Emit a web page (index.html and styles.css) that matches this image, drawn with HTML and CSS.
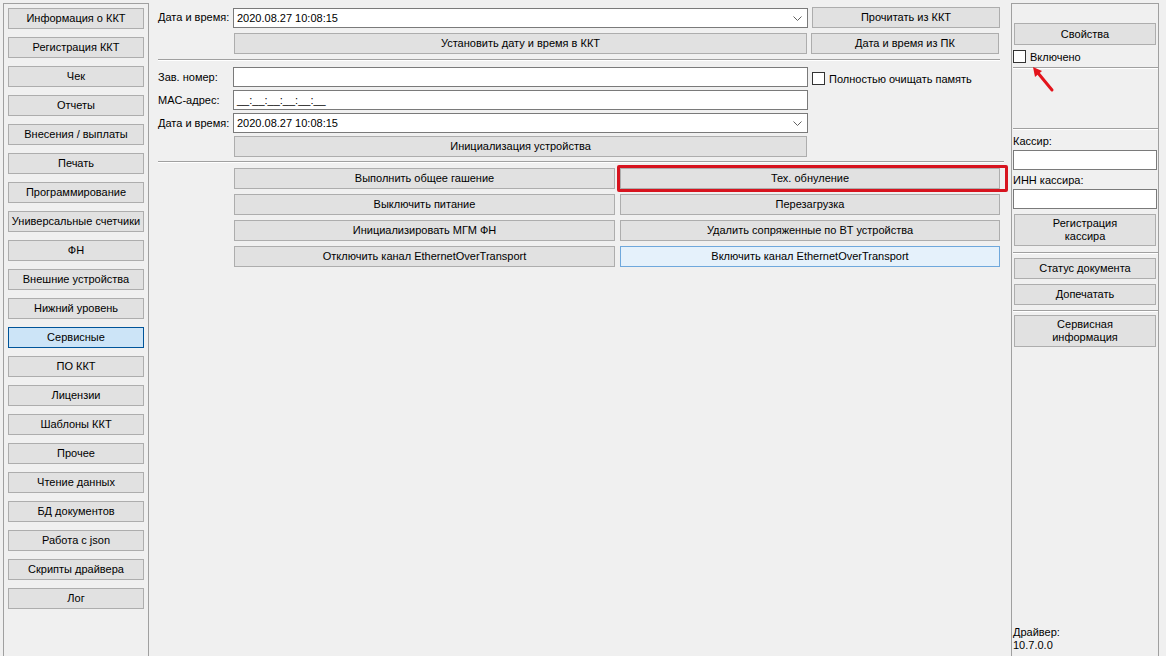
FILE: index.html
```html
<!DOCTYPE html>
<html lang="ru">
<head>
  <meta charset="UTF-8" />
  <title>Тест драйвера ККТ</title>
  <link rel="stylesheet" href="styles.css">
</head>
<body>

<div class="app">
  <aside class="nav">
    <button class="btn nav-btn">Информация о ККТ</button>
    <button class="btn nav-btn">Регистрация ККТ</button>
    <button class="btn nav-btn">Чек</button>
    <button class="btn nav-btn">Отчеты</button>
    <button class="btn nav-btn">Внесения / выплаты</button>
    <button class="btn nav-btn">Печать</button>
    <button class="btn nav-btn">Программирование</button>
    <button class="btn nav-btn">Универсальные счетчики</button>
    <button class="btn nav-btn">ФН</button>
    <button class="btn nav-btn">Внешние устройства</button>
    <button class="btn nav-btn">Нижний уровень</button>
    <button class="btn nav-btn active">Сервисные</button>
    <button class="btn nav-btn">ПО ККТ</button>
    <button class="btn nav-btn">Лицензии</button>
    <button class="btn nav-btn">Шаблоны ККТ</button>
    <button class="btn nav-btn">Прочее</button>
    <button class="btn nav-btn">Чтение данных</button>
    <button class="btn nav-btn">БД документов</button>
    <button class="btn nav-btn">Работа с json</button>
    <button class="btn nav-btn">Скрипты драйвера</button>
    <button class="btn nav-btn">Лог</button>
  </aside>

  <main class="main">
    <div class="row first">
      <span class="lbl">Дата и время:</span>
      <div class="field select">2020.08.27 10:08:15
        <svg class="chev" width="9" height="5" viewBox="0 0 9 5"><polyline points="0.5,0.5 4.5,4.5 8.5,0.5" fill="none" stroke="#606060" stroke-width="1"/></svg>
      </div>
      <button class="btn side">Прочитать из ККТ</button>
    </div>
    <div class="row gap5">
      <span class="lbl"></span>
      <button class="btn wide">Установить дату и время в ККТ</button>
      <button class="btn side">Дата и время из ПК</button>
    </div>

    <div class="sep sep-top"></div>

    <div class="row form-row">
      <span class="lbl">Зав. номер:</span>
      <div class="field"></div>
      <label class="check"><span class="box"></span>Полностью очищать память</label>
    </div>
    <div class="row form-row">
      <span class="lbl">MAC-адрес:</span>
      <div class="field">__:__:__:__:__:__</div>
    </div>
    <div class="row form-row">
      <span class="lbl">Дата и время:</span>
      <div class="field select">2020.08.27 10:08:15
        <svg class="chev" width="9" height="5" viewBox="0 0 9 5"><polyline points="0.5,0.5 4.5,4.5 8.5,0.5" fill="none" stroke="#606060" stroke-width="1"/></svg>
      </div>
    </div>
    <div class="row form-row">
      <span class="lbl"></span>
      <button class="btn wide">Инициализация устройства</button>
    </div>

    <div class="sep sep-mid"></div>

    <div class="actions">
      <button class="btn">Выполнить общее гашение</button>
      <div class="marked">
        <button class="btn">Тех. обнуление</button>
        <span class="red-frame"></span>
      </div>
      <button class="btn">Выключить питание</button>
      <button class="btn">Перезагрузка</button>
      <button class="btn">Инициализировать МГМ ФН</button>
      <button class="btn">Удалить сопряженные по BT устройства</button>
      <button class="btn">Отключить канал EthernetOverTransport</button>
      <button class="btn hot">Включить канал EthernetOverTransport</button>
    </div>
  </main>

  <aside class="panel">
    <button class="btn pbtn props">Свойства</button>
    <label class="check on"><span class="box"></span>Включено</label>
    <div class="sep psep first-sep"></div>
    <div class="sep psep second-sep"></div>

    <div class="plbl">Кассир:</div>
    <div class="field pfield"></div>
    <div class="plbl inn">ИНН кассира:</div>
    <div class="field pfield"></div>
    <button class="btn pbtn tall">Регистрация<br>кассира</button>
    <div class="sep psep s3"></div>
    <button class="btn pbtn b1">Статус документа</button>
    <button class="btn pbtn b2">Допечатать</button>
    <div class="sep psep s4"></div>
    <button class="btn pbtn tall b3">Сервисная<br>информация</button>

    <div class="driver">Драйвер:<br>10.7.0.0</div>

    <svg class="arrow" width="30" height="30" viewBox="0 0 30 30">
      <line x1="22" y1="25" x2="8" y2="8" stroke="#e3141c" stroke-width="3" stroke-linecap="round"/>
      <polygon points="3,2 12,6 5,12" fill="#e3141c"/>
    </svg>
  </aside>
</div>

</body>
</html>
```

FILE: styles.css
```css
* {
  box-sizing: border-box;
}
body {
  margin: 0;
  background: #f0f0f0;
  font-family: Tahoma, "Liberation Sans", Arial, sans-serif;
  font-size: 11px;
  color: #000;
  overflow: hidden;
}
.app {
  display: flex;
  height: 656px;
  padding-top: 3px;
}

/* buttons */
.btn {
  height: 21px;
  padding: 0;
  margin: 0;
  font-family: inherit;
  font-size: 11px;
  font-weight: 400;
  color: #000;
  background: #e1e1e1;
  border: 1px solid #adadad;
  text-align: center;
  line-height: 13px;
}
.btn.active {
  background: #cce4f7;
  border-color: #005499;
}
.btn.hot {
  background: #e5f1fb;
  border-color: #6fa8dc;
}

/* left menu */
.nav {
  margin-left: 3px;
  width: 146px;
  border: 1px solid #a0a0a0;
  border-bottom: none;
  padding: 4px 4px 0 4px;
  display: flex;
  flex-direction: column;
  gap: 8px;
}
.nav-btn {
  width: 136px;
  flex: none;
}

/* centre */
.main {
  width: 862px;
  padding: 4px 0 0 9px;
}
.row {
  display: flex;
  align-items: flex-start;
}
.gap5 {
  margin-top: 5px;
}
.lbl {
  width: 75px;
  flex: none;
  white-space: nowrap;
  line-height: 20px;
}
.first .lbl {
  line-height: 21px;
}
.field {
  width: 575px;
  height: 20px;
  background: #fff;
  border: 1px solid #7a7a7a;
  padding-left: 3px;
  line-height: 18px;
  white-space: pre;
  position: relative;
}
.first .field {
  margin-top: 1px;
}
.select .chev {
  position: absolute;
  right: 5px;
  top: 7px;
}
.side {
  width: 188px;
  margin-left: 4px;
}
.wide {
  width: 573px;
  margin-left: 1px;
}
.sep {
  height: 2px;
  border-top: 1px solid #a0a0a0;
  border-bottom: 1px solid #fff;
}
.sep-top {
  margin: 5px 0 0 0;
  width: 842px;
}
.sep-mid {
  margin-top: 4px;
  width: 846px;
}
.form-row {
  margin-top: 3px;
}
.sep-top + .form-row {
  margin-top: 6px;
}
.check {
  display: flex;
  align-items: center;
  gap: 4px;
  margin: 5px 0 0 4px;
  white-space: nowrap;
}
.box {
  width: 13px;
  height: 13px;
  background: #fff;
  border: 1px solid #333;
  flex: none;
}

.actions {
  margin: 5px 0 0 76px;
  display: grid;
  grid-template-columns: 381px 380px;
  column-gap: 5px;
  row-gap: 5px;
}
.actions > .btn,
.marked .btn {
  width: 100%;
}
.marked {
  position: relative;
  height: 21px;
}
.red-frame {
  position: absolute;
  left: -3px;
  right: -8px;
  top: -3px;
  bottom: -3px;
  border: 3px solid #d7141f;
  border-radius: 2px;
}

/* right panel */
.panel {
  width: 148px;
  border: 1px solid #a0a0a0;
  border-bottom: none;
  padding: 19px 0 4px 0;
  display: flex;
  flex-direction: column;
  position: relative;
}
.pbtn {
  width: 142px;
  margin-left: 2px;
  flex: none;
}
.props {
  height: 22px;
}
.check.on {
  margin: 5px 0 0 1px;
}
.psep {
  width: 145px;
  margin-left: 1px;
  flex: none;
}
.first-sep {
  margin-top: 4px;
}
.second-sep {
  margin-top: 59px;
}
.plbl {
  margin: 5px 0 0 1px;
  line-height: 13px;
}
.plbl.inn {
  margin-top: 4px;
}
.pfield {
  width: 144px;
  margin: 2px 0 0 1px;
  flex: none;
}
.tall {
  height: 32px;
  margin-top: 5px;
}
.s3 {
  margin-top: 6px;
}
.b1 {
  margin-top: 4px;
}
.b2 {
  margin-top: 5px;
}
.s4 {
  margin-top: 5px;
}
.b3 {
  margin-top: 3px;
}
.driver {
  margin-top: auto;
  margin-left: 1px;
  line-height: 13px;
}
.arrow {
  position: absolute;
  left: 18px;
  top: 61px;
}
```
